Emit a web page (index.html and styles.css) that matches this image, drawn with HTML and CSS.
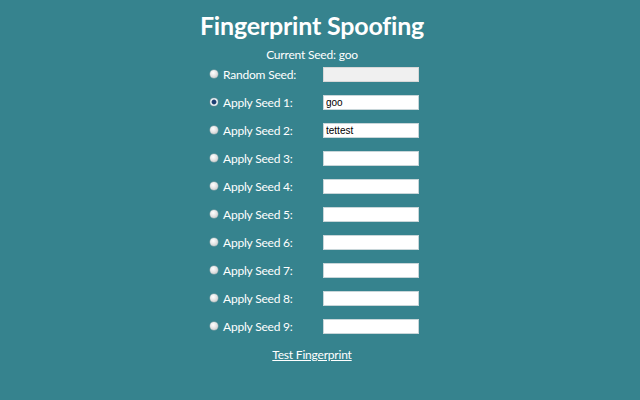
FILE: index.html
```html
<!DOCTYPE html>
<html>
<head>
<meta charset="utf-8">
<link rel="stylesheet" href="styles.css">
</head>
<body>
<div class="page">
  <h1 class="title">Fingerprint Spoofing</h1>
  <div class="current">Current Seed: goo</div>
  <div class="seeds">
    <label class="row"><span class="radio"></span><span class="label">Random Seed:</span><input class="field" type="text" disabled></label>
    <label class="row"><span class="radio checked"></span><span class="label">Apply Seed 1:</span><input class="field" type="text" value="goo"></label>
    <label class="row"><span class="radio"></span><span class="label">Apply Seed 2:</span><input class="field" type="text" value="tettest"></label>
    <label class="row"><span class="radio"></span><span class="label">Apply Seed 3:</span><input class="field" type="text"></label>
    <label class="row"><span class="radio"></span><span class="label">Apply Seed 4:</span><input class="field" type="text"></label>
    <label class="row"><span class="radio"></span><span class="label">Apply Seed 5:</span><input class="field" type="text"></label>
    <label class="row"><span class="radio"></span><span class="label">Apply Seed 6:</span><input class="field" type="text"></label>
    <label class="row"><span class="radio"></span><span class="label">Apply Seed 7:</span><input class="field" type="text"></label>
    <label class="row"><span class="radio"></span><span class="label">Apply Seed 8:</span><input class="field" type="text"></label>
    <label class="row"><span class="radio"></span><span class="label">Apply Seed 9:</span><input class="field" type="text"></label>
  </div>
  <a class="test" href="#">Test Fingerprint</a>
</div>
</body>
</html>
```
FILE: styles.css
```css
html, body {
  margin: 0;
  padding: 0;
  height: 100%;
}
body {
  background: #36838e;
  color: #ffffff;
  font-family: Lato, "Open Sans", sans-serif;
}
.page {
  display: flex;
  flex-direction: column;
  align-items: center;
  width: 624px;
  padding-top: 10px;
}
.title {
  margin: 0;
  font-size: 25px;
  font-weight: 700;
  line-height: 30px;
  letter-spacing: -0.2px;
}
.current {
  margin-top: 6px;
  font-size: 12px;
  line-height: 18px;
  letter-spacing: -0.2px;
}
.seeds {
  display: flex;
  flex-direction: column;
  margin-top: -4px;
  margin-left: 3px;
}
.row {
  display: flex;
  align-items: center;
  height: 28px;
  font-size: 12px;
  letter-spacing: -0.2px;
}
.radio {
  width: 8px;
  height: 8px;
  border-radius: 50%;
  background: radial-gradient(circle at 40% 35%, #ffffff 0%, #e6e6e6 45%, #bdbdbd 100%);
  box-shadow: 0 0 0 0.5px #8fa9ad;
  margin-left: 2px;
  margin-right: 5px;
  flex: none;
}
.radio.checked {
  background: radial-gradient(circle, #1d3f73 0 1.8px, #5d7a9c 2.3px, #e8eef2 2.8px, #c9d2d8 100%);
  box-shadow: 0 0 0 0.5px #6f8590;
}
.label {
  width: 100px;
}
.field {
  box-sizing: border-box;
  width: 96px;
  height: 15px;
  margin: 0;
  padding: 0 2px;
  border: 1px solid #c8d6d9;
  background: #ffffff;
  font-family: "Liberation Sans", Arial, sans-serif;
  font-size: 10px;
  letter-spacing: 0;
  color: #000;
  outline: none;
}
.field:disabled {
  background: #f0f0f0;
  border-color: #d8d8d8;
}
.test {
  margin-top: 6px;
  color: #ffffff;
  font-size: 12px;
  line-height: 18px;
  letter-spacing: -0.2px;
  text-decoration: underline;
}
```
